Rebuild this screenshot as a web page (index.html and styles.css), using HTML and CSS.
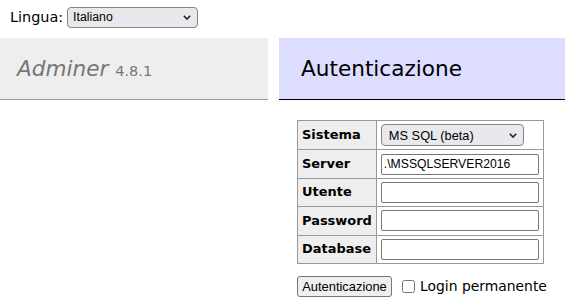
FILE: index.html
```html
<!DOCTYPE html>
<html lang="it">
<head>
    <meta charset="UTF-8">
    <title>Autenticazione - Adminer</title>
    <link rel="stylesheet" href="styles.css">
</head>
<body>
    <form class="lang" action="">
        <label for="lang">Lingua:</label>
        <span class="select-wrap lang-select">
            <select id="lang" name="lang">
                <option>Italiano</option>
            </select>
            <svg class="chevron" width="8" height="5" viewBox="0 0 8 5"><path d="M0.8 0.8 L4 4 L7.2 0.8" fill="none" stroke="#222" stroke-width="1.6"/></svg>
        </span>
    </form>

    <div class="layout">
        <div class="menu">
            <h1><a href="#" class="brand">Adminer</a> <span class="version">4.8.1</span></h1>
        </div>

        <div class="content">
            <h2>Autenticazione</h2>
            <form class="login" action="">
                <table class="login-table">
                    <tr>
                        <th>Sistema</th>
                        <td>
                            <span class="select-wrap driver-select">
                                <select name="driver">
                                    <option>MS SQL (beta)</option>
                                </select>
                                <svg class="chevron" width="8" height="5" viewBox="0 0 8 5"><path d="M0.8 0.8 L4 4 L7.2 0.8" fill="none" stroke="#222" stroke-width="1.6"/></svg>
                            </span>
                        </td>
                    </tr>
                    <tr>
                        <th>Server</th>
                        <td><input type="text" name="server" value=".\MSSQLSERVER2016"></td>
                    </tr>
                    <tr>
                        <th>Utente</th>
                        <td><input type="text" name="username"></td>
                    </tr>
                    <tr>
                        <th>Password</th>
                        <td><input type="password" name="password"></td>
                    </tr>
                    <tr>
                        <th>Database</th>
                        <td><input type="text" name="db"></td>
                    </tr>
                </table>
                <p class="actions">
                    <button type="submit">Autenticazione</button>
                    <label class="permanent"><input type="checkbox" name="permanent"> Login permanente</label>
                </p>
            </form>
        </div>
    </div>
</body>
</html>
```

FILE: styles.css
```css
* {
    box-sizing: border-box;
}

body {
    margin: 0;
    font: 14.4px/1.25 "DejaVu Sans", Verdana, sans-serif;
    color: #000;
    background: #fff;
}

select, input, button {
    font: 12px "Liberation Sans", Arial, sans-serif;
    color: #000;
}

/* language bar */
.lang {
    height: 38px;
    display: flex;
    align-items: center;
    gap: 4px;
    padding: 0 0 4px 10px;
}

/* selects drawn by hand, chevron laid over them */
.select-wrap {
    position: relative;
    display: block;
}

.select-wrap select {
    appearance: none;
    -webkit-appearance: none;
    display: block;
    width: 100%;
    height: 100%;
    margin: 0;
    padding: 0 20px 0 5px;
    border: 1px solid #858585;
    border-radius: 4px;
    background: #e9e9ed;
}

.chevron {
    position: absolute;
    right: 7px;
    top: 50%;
    margin-top: -2px;
    pointer-events: none;
}

.lang-select {
    width: 131px;
    height: 21px;
}

.lang-select select {
    font-size: 12.3px;
}

.driver-select {
    width: 143px;
    height: 22px;
}

.driver-select select {
    font-size: 12.8px;
    padding-left: 7px;
}

.layout {
    display: flex;
    align-items: flex-start;
}

/* left menu */
.menu {
    width: 268px;
    flex: none;
}

h1 {
    margin: 0;
    height: 62px;
    padding: 17px 17px 0;
    font-size: 21.6px;
    font-weight: normal;
    line-height: 27px;
    color: #777;
    background: #eee;
    border-bottom: 1px solid #999;
}

.brand {
    color: #777;
    font-style: italic;
    text-decoration: none;
}

.version {
    font-size: 14.5px;
}

/* main content */
.content {
    flex: 1;
    margin-left: 11px;
    padding-right: 5px;
}

h2 {
    margin: 0 0 20px;
    height: 62px;
    padding: 17px 22px 0;
    font-size: 21.6px;
    font-weight: normal;
    line-height: 27px;
    background: #ddf;
    border-bottom: 1px solid #000;
}

.login {
    padding-left: 18px;
}

.login-table {
    border-collapse: separate;
    border-spacing: 0;
    border-top: 1px solid #999;
    border-left: 1px solid #999;
    font-size: 12.96px;
}

.login-table th,
.login-table td {
    padding: 3.2px 4px;
    border-right: 1px solid #999;
    border-bottom: 1px solid #999;
    vertical-align: middle;
}

.login-table th {
    background: #eee;
    text-align: left;
}

.login-table input {
    display: block;
    width: 158px;
    height: 21px;
    margin: 0;
    padding: 1px 2px;
    border: 1px solid #767676;
    border-radius: 2px;
    background: #fff;
    font-size: 12.2px;
}

.actions {
    margin: 12px 0 0;
    display: flex;
    align-items: center;
    gap: 10px;
}

.actions button {
    width: 95px;
    height: 21px;
    padding: 0;
    border: 1px solid #767676;
    border-radius: 3px;
    background: #efefef;
    font-size: 12.9px;
}

.permanent {
    display: flex;
    align-items: center;
    gap: 3px;
    font-size: 13.9px;
}

.permanent input {
    width: 13px;
    height: 13px;
    margin: 0 2px 0 0;
}
```
